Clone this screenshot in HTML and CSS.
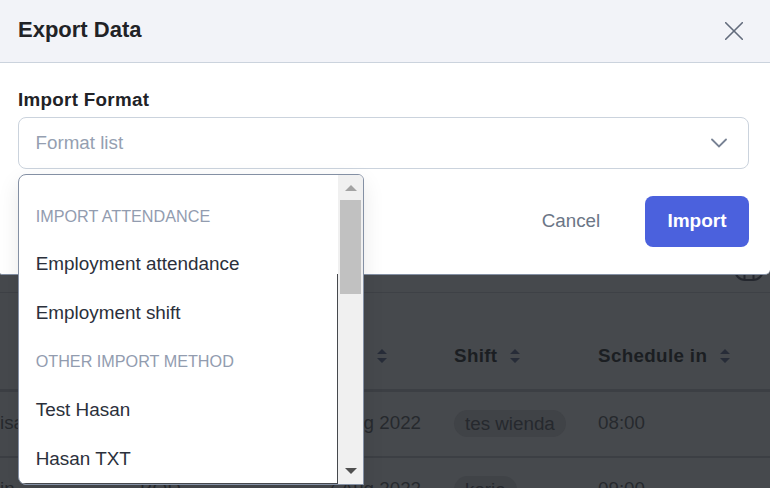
FILE: index.html
```html
<!DOCTYPE html>
<html lang="en">
<head>
<meta charset="utf-8">
<title>Export Data</title>
<link rel="stylesheet" href="styles.css">
</head>
<body>
<main class="page">
  <div class="toolbar">
    <svg class="globe" width="30" height="30" viewBox="0 0 30 30"><rect x="1" y="1" width="28" height="28" rx="10"/><path d="M10.500 1v28M19.500 1v28"/></svg>
  </div>
  <div class="row head">
    <span></span><span></span>
    <span class="date">Date <svg class="sort" width="10" height="14" viewBox="0 0 10 14"><path d="M0 5 5 0l5 5zM0 9h10l-5 5z"/></svg></span>
    <span>Shift <svg class="sort" width="10" height="14" viewBox="0 0 10 14"><path d="M0 5 5 0l5 5zM0 9h10l-5 5z"/></svg></span>
    <span>Schedule in <svg class="sort" width="10" height="14" viewBox="0 0 10 14"><path d="M0 5 5 0l5 5zM0 9h10l-5 5z"/></svg></span>
  </div>
  <div class="row">
    <span>isa</span><span></span><span class="date">7 Aug 2022</span><span class="shift"><b class="chip">tes wienda</b></span><span>08:00</span>
  </div>
  <div class="row">
    <span>in</span><span>BOD</span><span class="date">7 Aug 2022</span><span class="shift"><b class="chip">kerja</b></span><span>09:00</span>
  </div>
</main>

<section class="modal">
  <header class="modal-head">
    <h1>Export Data</h1>
    <svg width="18" height="18" viewBox="0 0 18 18"><path d="M.7.7l16.600 16.600M17.300.7.7 17.300"/></svg>
  </header>
  <div class="modal-body">
    <label>Import Format</label>
    <div class="select">
      <span>Format list</span>
      <svg width="16" height="10" viewBox="0 0 16 10"><path d="M1 1.500l7 7 7-7"/></svg>
    </div>
    <div class="actions">
      <button class="cancel">Cancel</button>
      <button class="import">Import</button>
    </div>
  </div>
</section>

<div class="menu">
  <ul>
    <li class="group">IMPORT ATTENDANCE</li>
    <li>Employment attendance</li>
    <li>Employment shift</li>
    <li class="group">OTHER IMPORT METHOD</li>
    <li>Test Hasan</li>
    <li>Hasan TXT</li>
  </ul>
  <div class="edge"></div>
  <div class="scrollbar">
    <i class="up"></i>
    <i class="thumb"></i>
    <i class="down"></i>
  </div>
</div>
</body>
</html>
```
FILE: styles.css
```css
* { box-sizing: border-box; }
body {
  margin: 0;
  width: 770px;
  height: 488px;
  overflow: hidden;
  position: relative;
  background: #46494d;
  font: 18.8px/24px "Liberation Sans", Arial, sans-serif;
  color: #2b303b;
}

.page { height: 488px; overflow: hidden; color: #26292e; }
.toolbar {
  height: 293px;
  display: flex;
  justify-content: flex-end;
  align-items: flex-end;
  padding: 0 6px 11px 0;
  border-bottom: 1px solid #3e4146;
}
.globe { fill: none; stroke: #24272e; stroke-width: 2; }
.row {
  height: 66px;
  display: grid;
  grid-template-columns: 140px 186px 128px 144px 1fr;
  align-items: center;
  padding-bottom: 2px;
  border-bottom: 2px solid #3c3f44;
  white-space: nowrap;
}
.head {
  height: 99px;
  padding: 30px 0 0;
  border-bottom: 3px solid #3c3f44;
  font-weight: bold;
  letter-spacing: .35px;
  color: #1b1e22;
}
.head span { display: flex; align-items: center; gap: 13px; }
.head .date { margin-left: -4px; }
.sort { fill: #272c38; }
.shift { display: flex; }
.chip {
  height: 27px;
  line-height: 27px;
  padding: 0 11px;
  border-radius: 14px;
  background: #404347;
  font-weight: normal;
}

.modal {
  position: absolute;
  inset: 0 0 auto 0;
  height: 275px;
  background: #fff;
  border-bottom: 1px solid #8490a4;
  border-radius: 0 0 5px 2px;
}
.modal-head {
  height: 63px;
  display: flex;
  align-items: flex-start;
  justify-content: space-between;
  padding: 17px 27px 0 18px;
  background: #f2f3f8;
  border-bottom: 1px solid #cbd3dd;
}
.modal-head svg { margin-top: 5px; fill: none; stroke: #626b7c; stroke-width: 1.6; stroke-linecap: round; }
h1 { margin: 0; font-size: 22px; line-height: 25px; color: #212226; }
.modal-body { padding: 25px 21px 0 18px; }
label { display: block; height: 29px; font-weight: bold; color: #212226; letter-spacing: .3px; }
.select {
  height: 52px;
  display: flex;
  align-items: center;
  justify-content: space-between;
  padding: 0 21px 1px 16.5px;
  border: 1px solid #cbd3dd;
  border-radius: 8px;
  color: #959fb1;
}
.select svg { fill: none; stroke: #788294; stroke-width: 1.8; stroke-linecap: round; }
.actions { display: flex; justify-content: flex-end; margin-top: 27px; }
button {
  height: 51px;
  padding: 0 0 2px;
  border: 0;
  background: none;
  font: inherit;
  color: #6b7686;
}
.cancel { width: 60px; margin-right: 44px; }
.import { width: 104px; border-radius: 8px; background: #4b61dd; color: #fff; font-size: 19px; font-weight: bold; }

.menu {
  position: absolute;
  left: 18px;
  top: 174px;
  width: 346px;
  height: 311px;
  display: flex;
  overflow: hidden;
  background: #fff;
  border: 1px solid #8490a4;
  border-radius: 8px 6px 0 8px;
  box-shadow: 0 8px 22px rgba(0, 0, 0, .09);
}
.menu ul { flex: 1; margin: 0; padding: 17px 0 0 16.7px; list-style: none; border-bottom: 1px solid #46494d; }
.menu li { height: 48.4px; line-height: 48px; font-size: 18.9px; }
.menu li:last-child { margin-top: .6px; }
.menu .group { font-size: 16.2px; color: #929caf; }
.edge { width: 1px; margin-top: 99px; background: #46494d; }
.scrollbar {
  width: 25px;
  display: flex;
  flex-direction: column;
  align-items: center;
  background: #f0f0f0;
}
.up, .down { border: solid transparent; border-width: 0 6px; }
.up { margin-top: 10px; border-bottom: 6px solid #a3a3a3; }
.thumb { width: 21px; height: 94px; margin-top: 9px; background: #c1c1c1; }
.down { margin: auto 0 10px; border-top: 6px solid #505050; }
```
